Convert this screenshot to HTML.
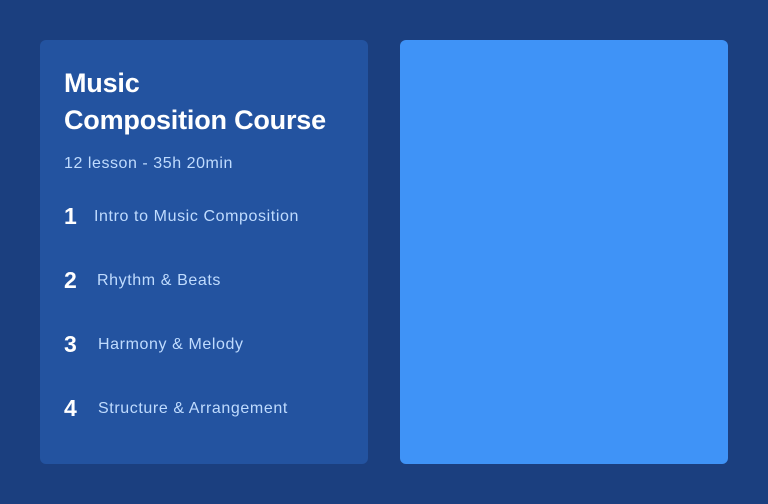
<!DOCTYPE html>
<html><head><style>
body{margin:0;width:768px;height:504px;background:#1b3f7f;font-family:"Liberation Sans",sans-serif;position:relative;overflow:hidden}
.card{position:absolute;left:40px;top:40px;width:328px;height:424px;background:#2353a0;border-radius:6px}
.right{position:absolute;left:400px;top:40px;width:328px;height:424px;background:#3f93f7;border-radius:6px}
h1{position:absolute;left:24px;top:25px;margin:0;color:#fff;font-size:27px;line-height:37px;font-weight:700;letter-spacing:-0.2px;white-space:nowrap}
.sub{position:absolute;left:24px;top:114px;color:#bfdbfe;font-size:16px;line-height:20px;letter-spacing:0.55px}
.n{position:absolute;left:24px;color:#fff;font-size:23px;font-weight:700;line-height:30px}
.t{position:absolute;color:#bfdbfe;font-size:16px;line-height:30px;letter-spacing:0.6px;white-space:nowrap}
</style></head><body>
<div class="card">
<h1>Music<br>Composition Course</h1>
<div class="sub">12 lesson - 35h 20min</div>
<div class="n" style="top:161px">1</div><div class="t" style="top:162px;left:54px">Intro to Music Composition</div>
<div class="n" style="top:225px">2</div><div class="t" style="top:226px;left:57px">Rhythm &amp; Beats</div>
<div class="n" style="top:289px">3</div><div class="t" style="top:290px;left:58px">Harmony &amp; Melody</div>
<div class="n" style="top:353px">4</div><div class="t" style="top:354px;left:58px">Structure &amp; Arrangement</div>
</div>
<div class="right"></div>
</body></html>
